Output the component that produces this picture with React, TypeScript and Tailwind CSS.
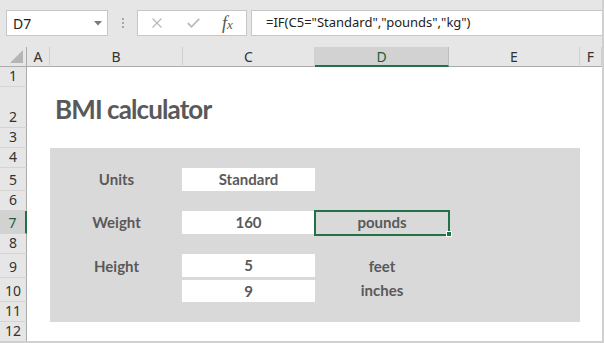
import React from 'react';

const rowHeights = [20, 41, 20, 20, 23, 20, 23, 20, 24, 24, 20, 20];
const columns = ['A', 'B', 'C', 'D', 'E', 'F'];

const ui = { fontFamily: '"Noto Sans", "Open Sans", sans-serif' };
const sheet = { fontFamily: 'Lato, "Liberation Sans", sans-serif' };

const NameBox = () => (
  <div className="flex h-[26px] w-[102px] items-center justify-between border border-[#c6c6c6] bg-white pl-[6px] pr-[5px]">
    <span className="text-[14px] text-[#222]" style={ui}>
      D7
    </span>
    <svg width="8" height="5" viewBox="0 0 8 5">
      <path d="M0 0h8L4 4.5z" fill="#7a7a7a" />
    </svg>
  </div>
);

const FormulaButtons = () => (
  <div className="flex h-[26px] w-[110px] items-center border border-[#c6c6c6] bg-white">
    <svg className="ml-[14px]" width="10" height="10" viewBox="0 0 10 10">
      <path d="M0.5 0.5l9 9M9.5 0.5l-9 9" stroke="#b8b8b8" strokeWidth="1.2" />
    </svg>
    <svg className="ml-[25px]" width="13" height="10" viewBox="0 0 13 10">
      <path d="M0.8 5l3.7 3.8L12.2 0.8" stroke="#bcbcbc" strokeWidth="1.8" fill="none" />
    </svg>
    <span
      className="ml-[22px] text-[18px] italic leading-none text-[#555]"
      style={{ fontFamily: '"Liberation Serif", serif' }}
    >
      f<span className="text-[13px]">x</span>
    </span>
  </div>
);

const TopBar = () => (
  <div className="flex h-[47px] items-center bg-[#e6e6e6] pb-[1px] pl-[6px]">
    <NameBox />
    <div className="ml-[14px] mr-[13px] flex flex-col gap-[2px]">
      <span className="h-[2px] w-[2px] bg-[#a8a8a8]" />
      <span className="h-[2px] w-[2px] bg-[#a8a8a8]" />
      <span className="h-[2px] w-[2px] bg-[#a8a8a8]" />
    </div>
    <FormulaButtons />
    <div className="ml-[4px] flex h-[26px] flex-1 items-center border border-r-0 border-[#c6c6c6] bg-white pl-[14px]">
      <span className="text-[13px] text-[#222]" style={ui}>
        =IF(C5="Standard","pounds","kg")
      </span>
    </div>
  </div>
);

const Label = ({ children, className = '' }: { children: React.ReactNode; className?: string }) => (
  <div
    className={`flex items-center justify-center text-[15px] font-bold text-[#595959] ${className}`}
    style={sheet}
  >
    {children}
  </div>
);

export default function App() {
  return (
    <div className="h-[343px] w-[604px] overflow-hidden border-b-2 border-r-2 border-[#d0d0d0] bg-white">
      <TopBar />
      <div
        className="grid grid-cols-[27px_23px_133px_132px_134px_131px_1fr]"
        style={{ gridTemplateRows: `20px ${rowHeights.map((h) => `${h}px`).join(' ')}` }}
      >
        {/* corner */}
        <div className="col-start-1 row-start-1 flex items-end justify-end border-b border-r border-[#ababab] bg-[#e6e6e6] pb-[3px] pr-[3px]">
          <svg width="13" height="13" viewBox="0 0 13 13">
            <path d="M13 0V13H0z" fill="#b5b5b5" />
          </svg>
        </div>

        {/* column headers */}
        {columns.map((c) => (
          <div
            key={c}
            className={`row-start-1 flex items-center justify-center border-r text-[14px] ${
              c === 'D'
                ? 'border-b-2 border-r-[#bdbdbd] border-b-[#217346] bg-[#d2d2d2] text-[#1e5c3a]'
                : 'border-b border-r-[#d0d0d0] border-b-[#ababab] bg-[#e6e6e6] text-[#333]'
            }`}
            style={ui}
          >
            {c}
          </div>
        ))}

        {/* row headers */}
        {rowHeights.map((_, i) => {
          const n = i + 1;
          const active = n === 7;
          return (
            <div
              key={n}
              className={`col-start-1 flex items-end justify-center border-b border-b-[#d4d4d4] pb-[1px] text-[14px] leading-[18px] ${
                active
                  ? 'border-r-2 border-r-[#217346] bg-[#d2d2d2] text-[#1e5c3a]'
                  : 'border-r border-r-[#ababab] bg-[#e6e6e6] text-[#333]'
              }`}
              style={{ ...ui, gridRowStart: n + 1 }}
            >
              {n}
            </div>
          );
        })}

        {/* title */}
        <div
          className="col-start-3 col-span-3 row-start-3 flex items-end pb-[6px] pl-[5px] text-[26px] font-bold leading-none tracking-[-0.9px] text-[#595959]"
          style={sheet}
        >
          BMI calculator
        </div>

        {/* gray block */}
        <div className="col-start-3 col-span-4 row-start-5 row-span-8 bg-[#d9d9d9]" />

        <Label className="col-start-3 row-start-6">Units</Label>
        <Label className="col-start-4 row-start-6 -ml-px bg-white">Standard</Label>

        <Label className="col-start-3 row-start-8">Weight</Label>
        <Label className="col-start-4 row-start-8 -ml-px bg-white">160</Label>
        <div className="relative col-start-5 row-start-8">
          <Label className="h-full">pounds</Label>
          <div className="absolute -bottom-[2px] -left-px -right-px -top-px border-2 border-[#217346]" />
          <div className="absolute -bottom-[3px] -right-[3px] h-[6px] w-[6px] border border-white bg-[#217346]" />
        </div>

        <Label className="col-start-3 row-start-10">Height</Label>
        <Label className="col-start-4 row-start-10 -ml-px mb-px bg-white">5</Label>
        <Label className="col-start-5 row-start-10">feet</Label>
        <Label className="col-start-4 row-start-11 -ml-px mt-[2px] bg-white">9</Label>
        <Label className="col-start-5 row-start-11">inches</Label>
      </div>
    </div>
  );
}
